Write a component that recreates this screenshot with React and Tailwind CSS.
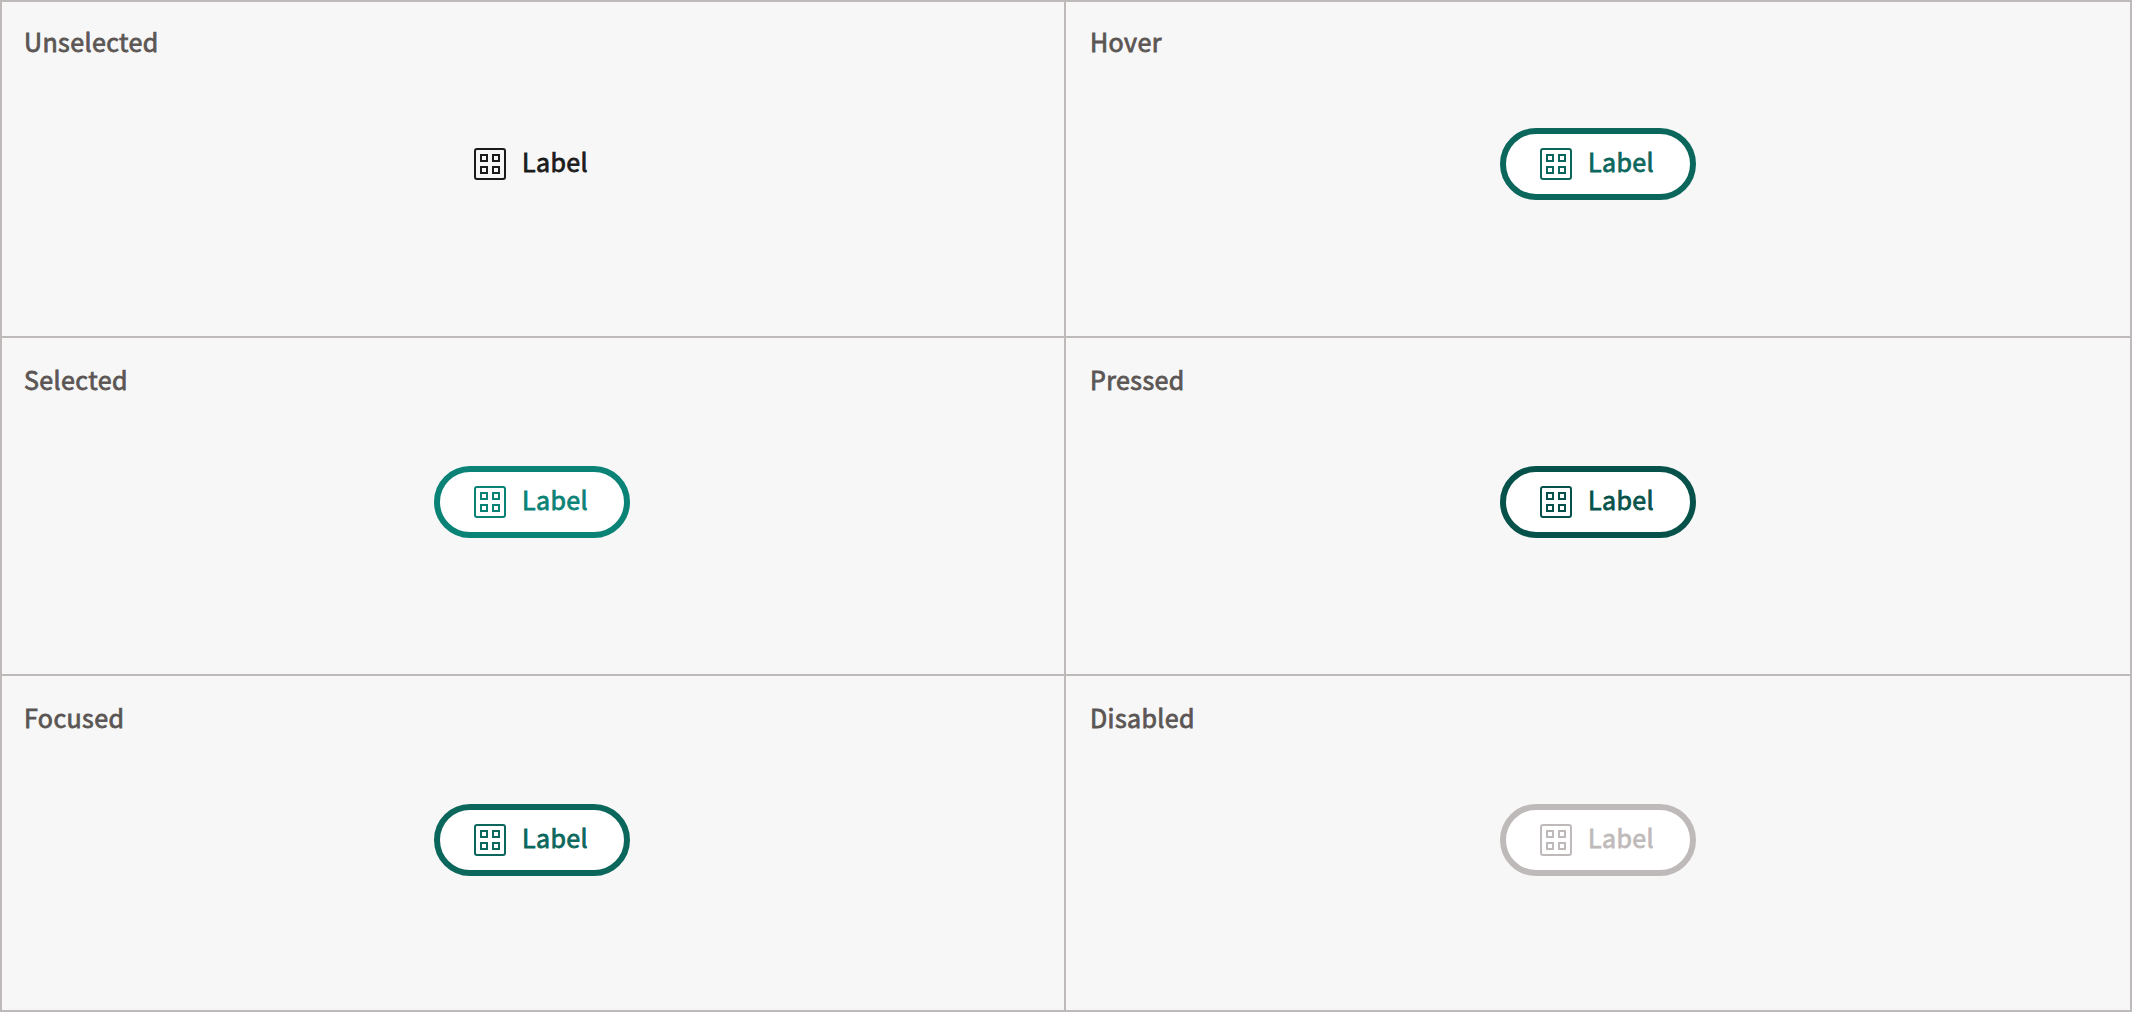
import React from "react";

function GridIcon() {
  return (
    <svg className="size-8 shrink-0" viewBox="0 0 32 32" fill="none" stroke="currentColor" strokeWidth="2">
      <rect x="1" y="1" width="30" height="30" rx="2" />
      <rect x="7" y="7" width="6" height="6" />
      <rect x="19" y="7" width="6" height="6" />
      <rect x="7" y="19" width="6" height="6" />
      <rect x="19" y="19" width="6" height="6" />
    </svg>
  );
}

function Pill({ tone }) {
  return (
    <button
      className={`flex h-[72px] w-[196px] items-center rounded-full border-6 pl-[34px] ${tone}`}
    >
      <GridIcon />
      <span className="mb-1.5 ml-4 text-[25px] leading-8 tracking-[0.4px] [-webkit-text-stroke:0.8px_currentColor]">Label</span>
    </button>
  );
}

const cells = [
  { name: "Unselected", edge: "border-t-2 border-l-2 pr-0.5", tone: "border-transparent text-[#1b1b1b]", top: "pt-[126px]" },
  { name: "Hover", edge: "border-t-2", tone: "border-[#0b675c] bg-white text-[#0b675c]", top: "pt-[126px]" },
  { name: "Selected", edge: "border-l-2 pr-0.5", tone: "border-[#0a8276] bg-white text-[#0a8276]", top: "pt-32" },
  { name: "Pressed", edge: "", tone: "border-[#06524a] bg-white text-[#06524a]", top: "pt-32" },
  { name: "Focused", edge: "border-l-2 pr-0.5", tone: "border-[#0b675c] bg-white text-[#0b675c]", top: "pt-32" },
  { name: "Disabled", edge: "", tone: "border-[#bfbaba] bg-white text-[#bfbaba]", top: "pt-32" },
];

function Cell({ name, edge, tone, top }) {
  return (
    <section className={`relative flex justify-center border-r-2 border-b-2 border-[#bfbaba] bg-[#f7f7f7] ${edge} ${top}`}>
      <h2 className={`absolute top-0 ${edge.includes("border-l-2") ? "left-[22px]" : "left-6"} ${edge.includes("border-t-2") ? "mt-[23px]" : "mt-[25px]"} text-[25px] leading-8 tracking-[0.4px] text-[#5b5654] [-webkit-text-stroke:0.8px_currentColor]`}>
        {name}
      </h2>
      <Pill tone={tone} />
    </section>
  );
}

export default function App() {
  return (
    <main className="grid h-[1012px] w-[2132px] grid-cols-[1066px_1066px] grid-rows-[338px_338px_336px] items-stretch font-['Noto_Sans_CJK_SC',sans-serif]">
      {cells.map((cell) => (
        <Cell key={cell.name} {...cell} />
      ))}
    </main>
  );
}
